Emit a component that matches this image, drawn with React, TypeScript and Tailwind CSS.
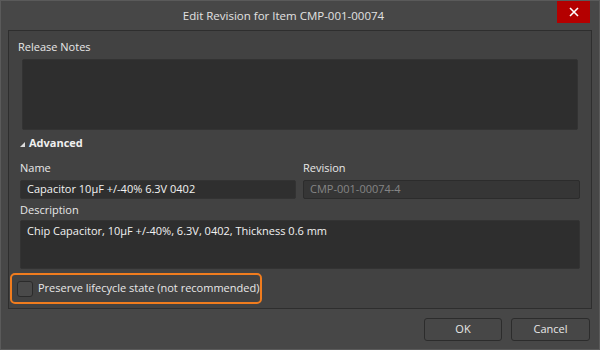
import React, { useState } from 'react';

const font = { fontFamily: '"Open Sans", "Noto Sans", sans-serif' };

const App = () => {
  const [preserve, setPreserve] = useState(false);

  return (
    <div
      className="w-[600px] h-[350px] bg-[#474747] border border-[#5a5a5a] flex flex-col text-[11px] text-[#e8e8e8] overflow-hidden"
      style={font}
    >
      {/* Title bar */}
      <div className="relative h-[29px] flex items-center shrink-0">
        <div className="w-[565px] text-center text-[11.5px] text-[#e2e2e2]">Edit Revision for Item CMP-001-00074</div>
        <button className="absolute right-[9px] top-[-1px] w-[33px] h-[23px] bg-[#b40000] flex items-center justify-center">
          <svg width="10" height="10" viewBox="0 0 10 10">
            <path d="M1 1 L9 9 M9 1 L1 9" stroke="#fff" strokeWidth="1.6" />
          </svg>
        </button>
      </div>

      {/* Main panel */}
      <div className="mx-[7px] h-[279px] border border-[#2e2e2e] bg-[#424242] flex flex-col shrink-0">
        <div className="pl-[9px] pt-[9px] leading-[14px]">Release Notes</div>
        <div className="ml-[13px] mt-[5px] w-[556px] h-[71px] bg-[#2e2e2e] border border-[#333333] rounded-[2px]" />

        {/* Advanced */}
        <div className="flex items-center pl-[11px] mt-[6px] h-[14px] font-bold text-[#f0f0f0]">
          <svg width="5" height="5" viewBox="0 0 5 5" className="mr-[4px] mt-[2px]">
            <path d="M0 5 L5 5 L5 0 Z" fill="#dcdcdc" />
          </svg>
          Advanced
        </div>

        <div className="flex gap-[7px] pl-[11px] mt-[11px]">
          <div className="flex flex-col w-[276px]">
            <div className="leading-[14px]">Name</div>
            <div className="mt-[5px] h-[19px] bg-[#2f2f2f] border border-[#333333] rounded-[2px] flex items-center px-[6px] text-[#f2f2f2]">
              Capacitor 10μF +/-40% 6.3V 0402
            </div>
          </div>
          <div className="flex flex-col w-[277px]">
            <div className="leading-[14px]">Revision</div>
            <div className="mt-[5px] h-[19px] bg-[#363636] border border-[#2c2c2c] rounded-[2px] flex items-center px-[6px] text-[#858585]">
              CMP-001-00074-4
            </div>
          </div>
        </div>

        <div className="pl-[11px] mt-[4px] leading-[14px]">Description</div>
        <div className="ml-[11px] mt-[3px] w-[560px] h-[49px] bg-[#2e2e2e] border border-[#333333] rounded-[2px] px-[6px] pt-[2px] text-[#f2f2f2]">
          Chip Capacitor, 10μF +/-40%, 6.3V, 0402, Thickness 0.6 mm
        </div>

        {/* Preserve lifecycle */}
        <label className="ml-[1px] mt-[4px] w-[252px] h-[31px] border-2 border-[#f07c1e] rounded-[5px] flex items-center pl-[5px] cursor-pointer whitespace-nowrap">
          <input
            type="checkbox"
            checked={preserve}
            onChange={() => setPreserve(!preserve)}
            className="appearance-none shrink-0 w-[16px] h-[16px] bg-[#4a4a4a] border border-[#2b2b2b] rounded-[3px] mr-[5px]"
          />
          <span>Preserve lifecycle state (not recommended)</span>
        </label>
      </div>

      {/* Buttons */}
      <div className="flex justify-end gap-[9px] pr-[9px] mt-[9px]">
        <button className="w-[78px] h-[23px] bg-[#474747] border border-[#2c2c2c] rounded-[3px] text-[#e8e8e8]">OK</button>
        <button className="w-[79px] h-[23px] bg-[#474747] border border-[#2c2c2c] rounded-[3px] text-[#e8e8e8]">Cancel</button>
      </div>
    </div>
  );
};

export default App;
